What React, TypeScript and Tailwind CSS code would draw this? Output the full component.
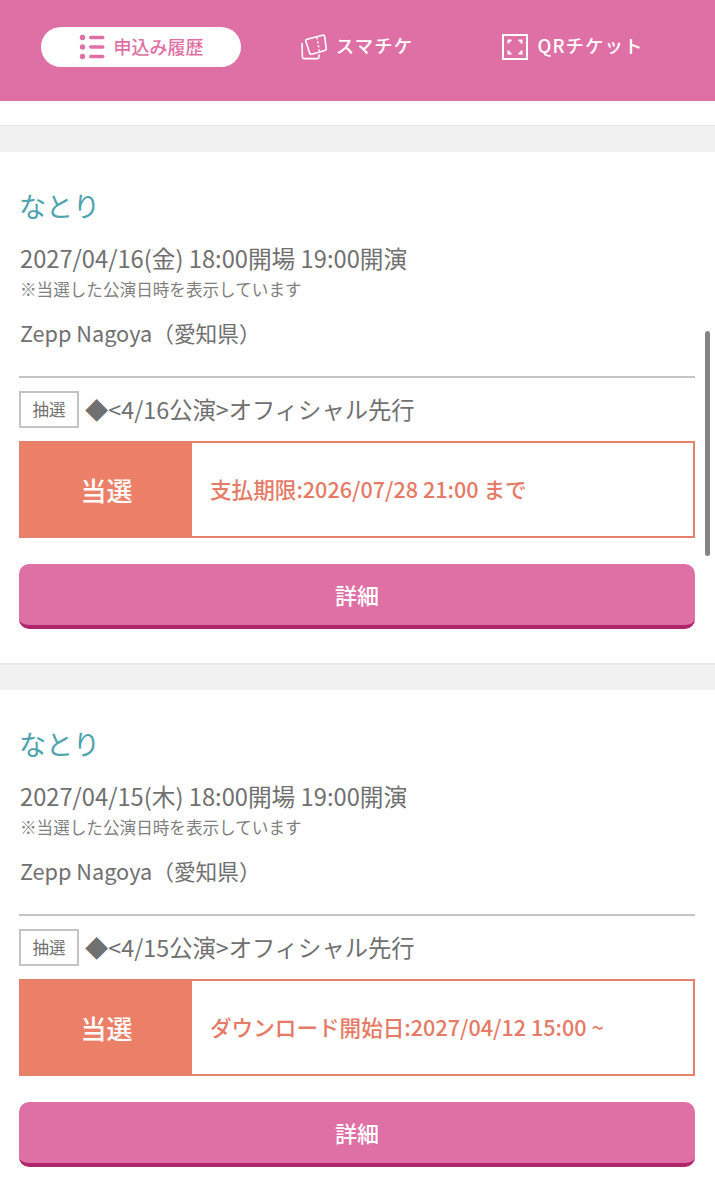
import { ReactNode } from 'react';

const FONT = "font-['Noto_Sans_CJK_JP','Noto_Sans',sans-serif]";

function ListIcon() {
  return (
    <svg width="26" height="26" viewBox="0 0 26 26" fill="#df70a5">
      <circle cx="3.5" cy="3.5" r="2.7" />
      <circle cx="3.5" cy="13" r="2.7" />
      <circle cx="3.5" cy="22.5" r="2.7" />
      <rect x="10" y="1.8" width="15.5" height="3.4" rx="1.7" />
      <rect x="10" y="11.3" width="15.5" height="3.4" rx="1.7" />
      <rect x="10" y="20.8" width="15.5" height="3.4" rx="1.7" />
    </svg>
  );
}

function TicketIcon() {
  return (
    <svg width="26" height="26" viewBox="0 0 26 26" fill="none" stroke="#fff" strokeWidth="1.6" strokeLinejoin="round">
      <path d="M1 9 L1.4 23 Q1.5 24.6 3 24.6 L16.5 24.6 Q18 24.6 18 23 L18 20.4" />
      <path d="M6 5.2 L21.5 1.2 Q23.4 0.9 23.7 2.6 L25.2 14.4 Q25.4 16 23.8 16.4 L10.6 20.2 Q9 20.5 8.6 19 L4.8 7 Q4.5 5.6 6 5.2 Z" />
      <path d="M16 3.5 L18.5 18" strokeDasharray="2 2" />
    </svg>
  );
}

function QrIcon() {
  return (
    <svg width="26" height="26" viewBox="0 0 26 26" fill="none" stroke="#fff">
      <rect x="1" y="1" width="24" height="24" strokeWidth="2" />
      <path d="M6.5 9.5 V6.5 H9.5 M16.5 6.5 H19.5 V9.5 M6.5 16.5 V19.5 H9.5 M16.5 19.5 H19.5 V16.5" strokeWidth="2" />
    </svg>
  );
}

function Tab({ icon, label, active }: { icon: ReactNode; label: string; active?: boolean }) {
  return (
    <div className={`flex h-[40px] w-[200px] items-center justify-center gap-[9px] rounded-full ${active ? 'bg-white text-[#df70a5]' : 'text-white'}`}>
      {icon}
      <span className={`-translate-y-px font-medium ${active ? 'text-[18px]' : 'text-[18.4px] tracking-[0.06em]'}`}>{label}</span>
    </div>
  );
}

interface Ticket {
  date: string;
  round: string;
  message: string;
}

const TICKETS: Ticket[] = [
  { date: '2027/04/16(金) 18:00開場 19:00開演', round: '◆<4/16公演>オフィシャル先行', message: '支払期限:2026/07/28 21:00 まで' },
  { date: '2027/04/15(木) 18:00開場 19:00開演', round: '◆<4/15公演>オフィシャル先行', message: 'ダウンロード開始日:2027/04/12 15:00 ~' },
];

function TicketCard({ ticket }: { ticket: Ticket }) {
  return (
    <section className="bg-white pt-[34px] pr-[20px] pb-[34px] pl-[19px]">
      <h2 className="text-[27px] leading-[40px] font-normal text-[#4fa3ad]">なとり</h2>
      <p className="mt-[15px] pl-px text-[23.7px] leading-[34px] text-[#707070]">{ticket.date}</p>
      <p className="mt-[3px] pl-px text-[16.6px] leading-[22px] text-[#808080]">※当選した公演日時を表示しています</p>
      <p className="mt-[17px] pl-px text-[21.7px] leading-[32px] text-[#707070]">Zepp Nagoya（愛知県）</p>
      <div className="mt-[27px] border-t-2 border-[#c4c4c4] pt-[13px]">
        <div className="flex items-center gap-[6px]">
          <span className="flex h-[37px] w-[60px] items-center justify-center border-2 border-[#c4c4c4] text-[16.5px] text-[#707070]">抽選</span>
          <span className="text-[23.3px] leading-[37px] text-[#707070]">{ticket.round}</span>
        </div>
        <div className="mt-[13px] flex h-[97px] border-2 border-[#e5806c]">
          <div className="flex w-[171px] items-center justify-center bg-[#ec7f68] text-[26px] font-medium text-white">当選</div>
          <div className="flex flex-1 items-center pl-[18px] text-[21.6px] font-medium text-[#e57a66]">{ticket.message}</div>
        </div>
        <button className="mt-[26px] flex h-[65px] w-full items-center justify-center rounded-[10px] border-b-[4px] border-[#b0246a] bg-[#df70a5] text-[22px] font-medium text-white">詳細</button>
      </div>
    </section>
  );
}

export default function App() {
  return (
    <div className={`relative h-[1200px] w-[715px] overflow-hidden bg-white ${FONT}`}>
      <header className="flex h-[101px] items-start gap-[16px] bg-[#df70a5] pt-[27px] pl-[41px]">
        <Tab icon={<ListIcon />} label="申込み履歴" active />
        <Tab icon={<TicketIcon />} label="スマチケ" />
        <Tab icon={<QrIcon />} label="QRチケット" />
      </header>
      <div className="h-[25px] border-b border-[#e2e2e2]" />
      <div className="h-[26px] bg-[#f1f1f1]" />
      <TicketCard ticket={TICKETS[0]} />
      <div className="h-[26.5px] border-t-2 border-[#e8e8e8] bg-[#f1f1f1]" />
      <TicketCard ticket={TICKETS[1]} />
      <div className="absolute top-[331px] left-[705px] h-[225px] w-[5px] rounded-full bg-[#848484]" />
    </div>
  );
}
